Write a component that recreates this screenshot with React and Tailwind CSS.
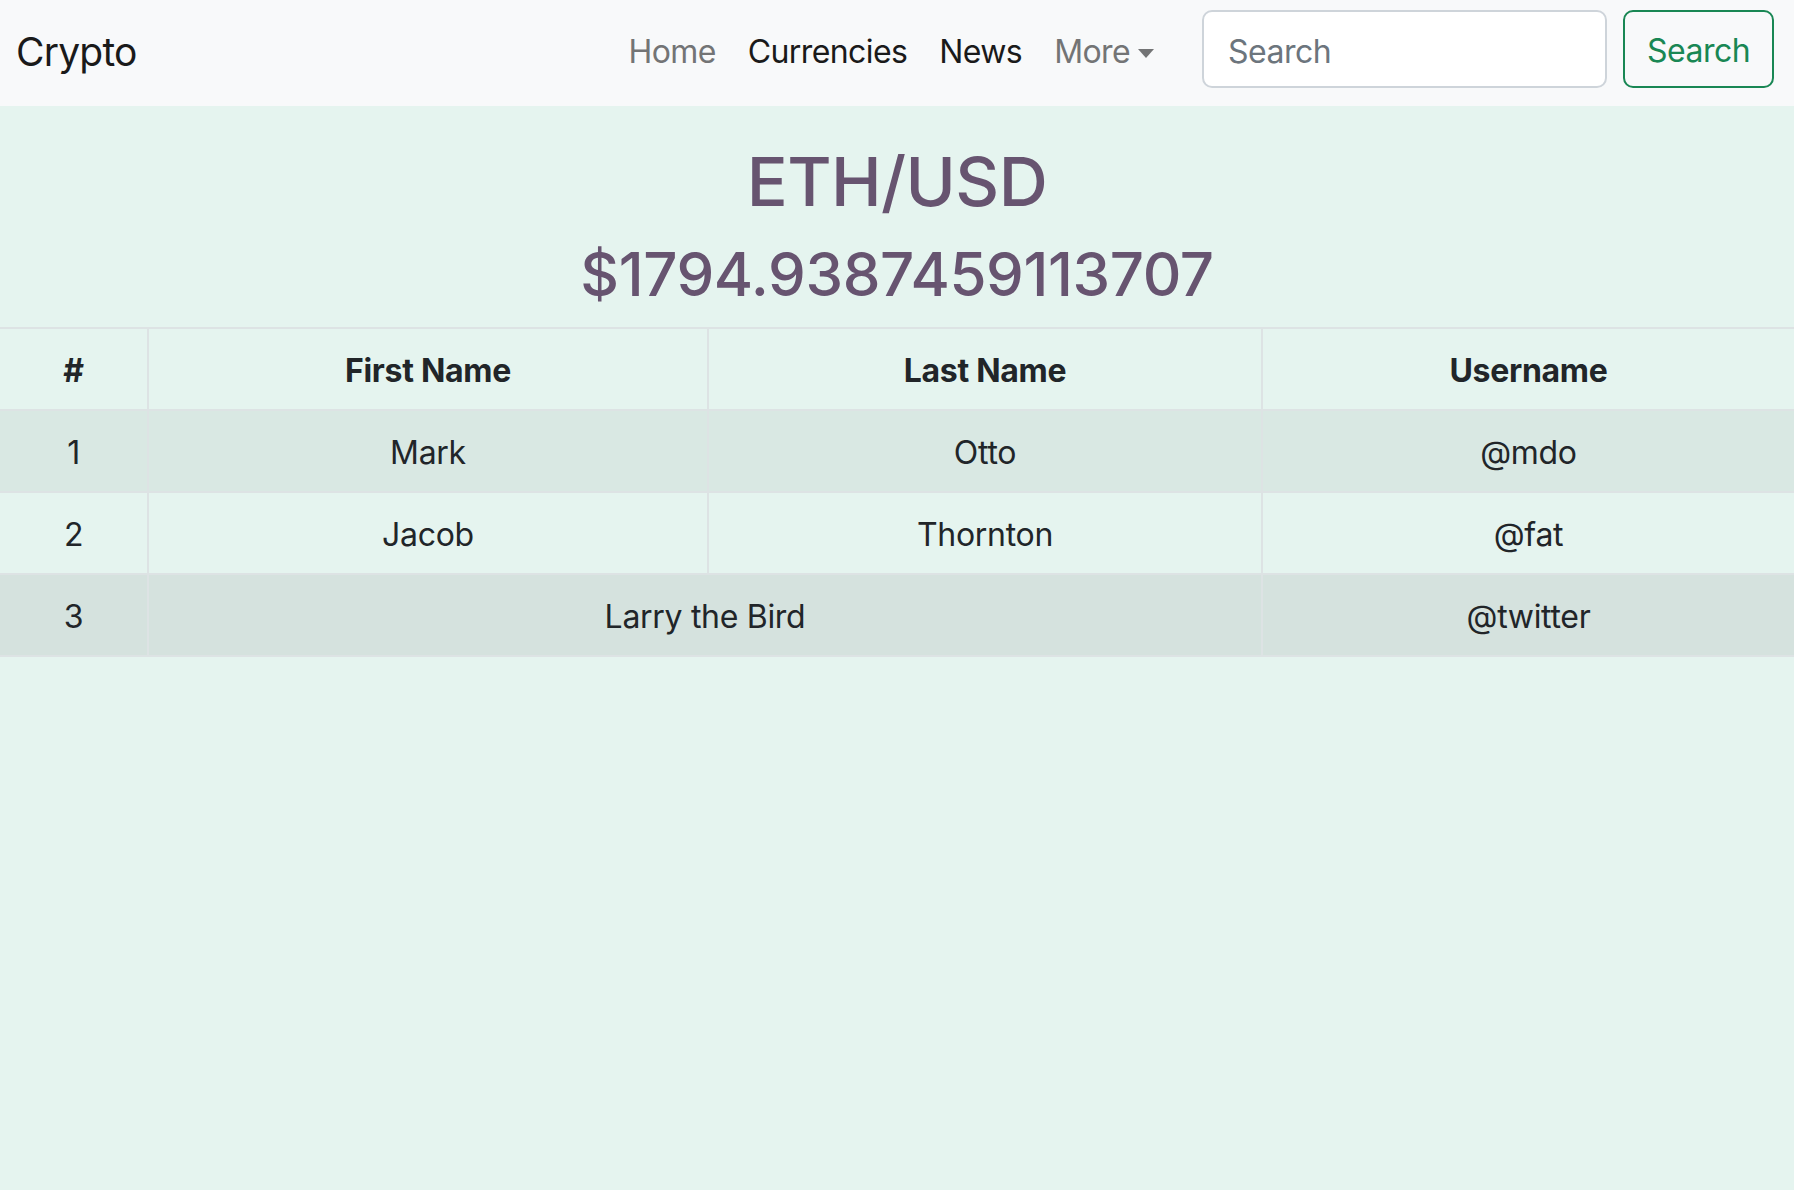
import React from 'react';

const rows = [
  { id: 1, first: 'Mark', last: 'Otto', user: '@mdo', bg: 'bg-[#d9e8e3]' },
  { id: 2, first: 'Jacob', last: 'Thornton', user: '@fat', bg: 'bg-[#e5f4ef]' },
  { id: 3, first: 'Larry the Bird', last: null, user: '@twitter', bg: 'bg-[#d5e2de]' },
];

const App = () => {
  return (
    <div className="min-h-screen bg-[#e5f4ef] font-['Inter','Liberation_Sans',sans-serif] text-[#212529]">
      <nav className="bg-[#f8f9fa] h-[106px] pt-[10px] pl-4 pr-5">
        <div className="flex items-center h-[78px]">
          <a className="mt-[4px] text-[39px] leading-none text-[#1a1a1a] tracking-[-0.8px]">Crypto</a>
          <ul className="mt-[5px] ml-auto flex items-center text-[32px] leading-none tracking-[-0.6px]">
            <li className="px-4 text-[#737475]">Home</li>
            <li className="px-4 text-[#1a1a1a]">Currencies</li>
            <li className="px-4 text-[#1a1a1a]">News</li>
            <li className="pl-4 pr-12 text-[#737475] flex items-center">
              More
              <span className="ml-2 mt-1 w-0 h-0 border-t-[9px] border-t-[#737475] border-x-[8px] border-x-transparent" />
            </li>
          </ul>
          <div className="flex items-center gap-4">
            <input
              placeholder="Search"
              className="w-[405px] h-[78px] bg-white border-2 border-[#ced4da] rounded-[10px] px-6 pt-[4px] text-[32px] placeholder:text-[#6c757d] tracking-[-0.5px] outline-none"
            />
            <button className="w-[151px] h-[78px] border-2 border-[#198754] rounded-[10px] pt-[4px] text-[32px] text-[#198754] tracking-[-0.5px]">
              Search
            </button>
          </div>
        </div>
      </nav>

      <div className="text-center text-[#675470] pt-[35px] pb-[17px]">
        <h1 className="text-[68px] leading-[1.2] font-medium tracking-[-0.6px]">ETH/USD</h1>
        <h2 className="mt-[15px] text-[60px] leading-[1.2] font-medium tracking-[-0.4px]">$1794.9387459113707</h2>
      </div>

      <table className="w-full border-collapse text-center text-[32px] leading-[48px] tracking-[-0.3px]">
        <thead>
          <tr className="border-y-2 border-[#dde3e4]">
            <th className="w-[148px] pt-[18px] pb-[14px] font-bold border-r-2 border-[#dde3e4]">#</th>
            <th className="w-[560px] pt-[18px] pb-[14px] font-bold border-r-2 border-[#dde3e4]">First Name</th>
            <th className="w-[554px] pt-[18px] pb-[14px] font-bold border-r-2 border-[#dde3e4]">Last Name</th>
            <th className="pt-[18px] pb-[14px] font-bold">Username</th>
          </tr>
        </thead>
        <tbody>
          {rows.map((r) => (
            <tr key={r.id} className={`${r.bg} border-b-2 border-[#dde3e4]`}>
              <td className="pt-[18px] pb-[14px] border-r-2 border-[#dde3e4]">{r.id}</td>
              {r.last === null ? (
                <td colSpan={2} className="pt-[18px] pb-[14px] border-r-2 border-[#dde3e4]">{r.first}</td>
              ) : (
                <>
                  <td className="pt-[18px] pb-[14px] border-r-2 border-[#dde3e4]">{r.first}</td>
                  <td className="pt-[18px] pb-[14px] border-r-2 border-[#dde3e4]">{r.last}</td>
                </>
              )}
              <td className="pt-[18px] pb-[14px]">{r.user}</td>
            </tr>
          ))}
        </tbody>
      </table>
    </div>
  );
};

export default App;
